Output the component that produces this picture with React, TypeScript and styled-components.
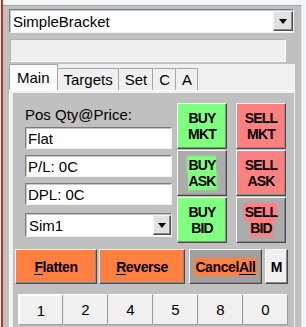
import styled, { createGlobalStyle, css } from 'styled-components';

const GlobalStyle = createGlobalStyle`
  html, body {
    margin: 0;
    padding: 0;
    background: #f3f6f9;
  }
  body {
    font-family: "Liberation Sans", Arial, sans-serif;
    font-size: 15px;
    color: #000;
  }
  * { box-sizing: border-box; }
`;

const raised = css`
  border-style: solid;
  border-width: 1px;
  border-color: #f6f6f6 #4a4a4a #4a4a4a #f6f6f6;
  box-shadow: inset -1px -1px 0 #8a8a8a;
`;

const Screen = styled.div`
  display: flex;
  width: 306px;
  height: 327px;
  overflow: hidden;
`;

const Edge = styled.div`
  width: 2px;
  margin-left: 1px;
  flex-shrink: 0;
  background: #bf3320;
`;

const Window = styled.div`
  width: 299px;
  margin-top: 5px;
  padding: 3px 7px 0 6px;
  background: #c0c0c0;
  border-top: 1px solid #a4a4a4;
  border-right: 1px solid #e6e6e6;
  display: flex;
  flex-direction: column;
`;

const Combo = styled.div<{ $h: number }>`
  display: flex;
  align-items: center;
  height: ${p => p.$h}px;
  background: #fff;
  border-style: solid;
  border-width: 1px;
  border-color: #7c7c7c #f2f2f2 #f2f2f2 #7c7c7c;
  box-shadow: inset 1px 1px 0 #c8c8c8;
  padding-left: 3px;
  font-size: 15px;
`;

const ComboText = styled.span`
  flex: 1;
`;

const ComboArrow = styled.div<{ $w: number }>`
  ${raised};
  width: ${p => p.$w}px;
  align-self: stretch;
  margin: 1px 0 1px 0;
  background: #e2e2e2;
  display: flex;
  align-items: center;
  justify-content: center;

  &::after {
    content: '';
    border-left: 4.5px solid transparent;
    border-right: 4.5px solid transparent;
    border-top: 5px solid #000;
  }
`;

const StatusBox = styled.div`
  width: 276px;
  height: 23px;
  margin: 6px 0 0 1px;
  background: #efefef;
  border-style: solid;
  border-width: 1px;
  border-color: #b4b4b4 #fafafa #fafafa #b4b4b4;
`;

const TabControl = styled.div`
  flex: 1;
  margin: 2px -1px 0 0;
  background: #f0f0f0;
  display: flex;
  flex-direction: column;
`;

const TabStrip = styled.div`
  display: flex;
  align-items: flex-end;
  height: 26px;
`;

const Tab = styled.div<{ $active?: boolean }>`
  height: ${p => (p.$active ? 26 : 22)}px;
  padding: 0 ${p => (p.$active ? 7 : 5)}px;
  display: flex;
  align-items: center;
  background: ${p => (p.$active ? '#fbfbfb' : '#f0f0f0')};
  border: 1px solid #a6a6a6;
  border-bottom: none;
  border-left-color: ${p => (p.$active ? '#a6a6a6' : 'transparent')};
  font-size: 15px;
  &:first-child { border-left-color: #a6a6a6; }
`;

const Pane = styled.div`
  flex: 1;
  padding: 2px 3px 0 3px;
  border-left: 1px solid #fff;
  border-top: 1px solid #fff;
  display: flex;
`;

const Panel = styled.div`
  flex: 1;
  background: #c0c0c0;
  padding: 10px 6px 0 2px;
  display: flex;
  flex-direction: column;
`;

const UpperRow = styled.div`
  display: flex;
  padding-left: 10px;
`;

const InfoColumn = styled.div`
  width: 147px;
  display: flex;
  flex-direction: column;
`;

const Caption = styled.div`
  margin-top: 3px;
  line-height: 17px;
  font-size: 15px;
`;

const Field = styled.div<{ $gap: number }>`
  height: 22px;
  margin-top: ${p => p.$gap}px;
  padding-left: 2px;
  display: flex;
  align-items: center;
  background: #fff;
  border-style: solid;
  border-width: 1px;
  border-color: #7c7c7c #f2f2f2 #f2f2f2 #7c7c7c;
  box-shadow: inset 1px 1px 0 #c8c8c8;
  font-size: 15px;
`;

const AccountBox = styled.div`
  margin-top: 8px;
`;

const TradeGrid = styled.div`
  margin-left: 5px;
  display: grid;
  grid-template-columns: 50px 50px;
  grid-auto-rows: 46px;
  column-gap: 9px;
  row-gap: 1px;
`;

const TradeButton = styled.button<{ $bg: string }>`
  ${raised};
  padding: 0;
  background: ${p => p.$bg};
  color: #000;
  font: bold 14px "Liberation Sans", Arial, sans-serif;
  letter-spacing: -0.8px;
  line-height: 16px;
`;

const Mark = styled.span<{ $hl?: string }>`
  background: ${p => p.$hl ?? 'transparent'};
  box-shadow: ${p => (p.$hl ? `0 0 2px 1px ${p.$hl}` : 'none')};
`;

const ActionRow = styled.div`
  display: flex;
  margin-top: 6px;
  height: 35px;
`;

const ActionButton = styled.button<{ $bg: string; $w: number; $gap: number }>`
  ${raised};
  width: ${p => p.$w}px;
  margin-left: ${p => p.$gap}px;
  padding: 0;
  background: ${p => p.$bg};
  color: #000;
  font: bold 14px "Liberation Sans", Arial, sans-serif;
  letter-spacing: -0.4px;

  u { text-underline-offset: 2px; }
`;

const QtyRow = styled.div`
  display: flex;
  margin: 10px 0 0 3px;
  height: 31px;
`;

const QtyButton = styled.button<{ $selected?: boolean }>`
  width: 45px;
  padding: 0;
  background: #f0f0f0;
  border-style: solid;
  border-width: ${p => (p.$selected ? '2px 1px 1px 2px' : '1px')};
  border-color: #ffffff #9c9c9c #9c9c9c ${p => (p.$selected ? '#ffffff' : '#e8e8e8')};
  color: #000;
  font: 15px "Liberation Sans", Arial, sans-serif;
`;

const tabs = ['Main', 'Targets', 'Set', 'C', 'A'];
const qtys = ['1', '2', '4', '5', '8', '0'];

export default function App() {
  return (
    <>
      <GlobalStyle />
      <Screen>
        <Edge />
        <Window>
          <Combo $h={24}>
            <ComboText>SimpleBracket</ComboText>
            <ComboArrow $w={20} />
          </Combo>
          <StatusBox />
          <TabControl>
            <TabStrip>
              {tabs.map((t, i) => (
                <Tab key={t} $active={i === 0}>{t}</Tab>
              ))}
            </TabStrip>
            <Pane>
              <Panel>
                <UpperRow>
                  <InfoColumn>
                    <Caption>Pos Qty@Price:</Caption>
                    <Field $gap={4}>Flat</Field>
                    <Field $gap={6}>P/L: 0C</Field>
                    <Field $gap={6}>DPL: 0C</Field>
                    <AccountBox>
                      <Combo $h={24}>
                        <ComboText>Sim1</ComboText>
                        <ComboArrow $w={18} />
                      </Combo>
                    </AccountBox>
                  </InfoColumn>
                  <TradeGrid>
                    <TradeButton $bg="#80ff80"><Mark>BUY<br />MKT</Mark></TradeButton>
                    <TradeButton $bg="#ff8080"><Mark>SELL<br />MKT</Mark></TradeButton>
                    <TradeButton $bg="#acacac"><Mark $hl="#80ff80">BUY<br />ASK</Mark></TradeButton>
                    <TradeButton $bg="#ff8080"><Mark>SELL<br />ASK</Mark></TradeButton>
                    <TradeButton $bg="#80ff80"><Mark>BUY<br />BID</Mark></TradeButton>
                    <TradeButton $bg="#acacac"><Mark $hl="#ff8080">SELL<br />BID</Mark></TradeButton>
                  </TradeGrid>
                </UpperRow>
                <ActionRow>
                  <ActionButton $bg="#ff8040" $w={82} $gap={0}><u>F</u>latten</ActionButton>
                  <ActionButton $bg="#ff8040" $w={86} $gap={2}><u>R</u>everse</ActionButton>
                  <ActionButton $bg="#a0a0a0" $w={73} $gap={4}>
                    <Mark $hl="#ff8040">Cancel<u>All</u></Mark>
                  </ActionButton>
                  <ActionButton $bg="#f0f0f0" $w={23} $gap={3}>M</ActionButton>
                </ActionRow>
                <QtyRow>
                  {qtys.map((q, i) => (
                    <QtyButton key={q} $selected={i === 0}>{q}</QtyButton>
                  ))}
                </QtyRow>
              </Panel>
            </Pane>
          </TabControl>
        </Window>
      </Screen>
    </>
  );
}
